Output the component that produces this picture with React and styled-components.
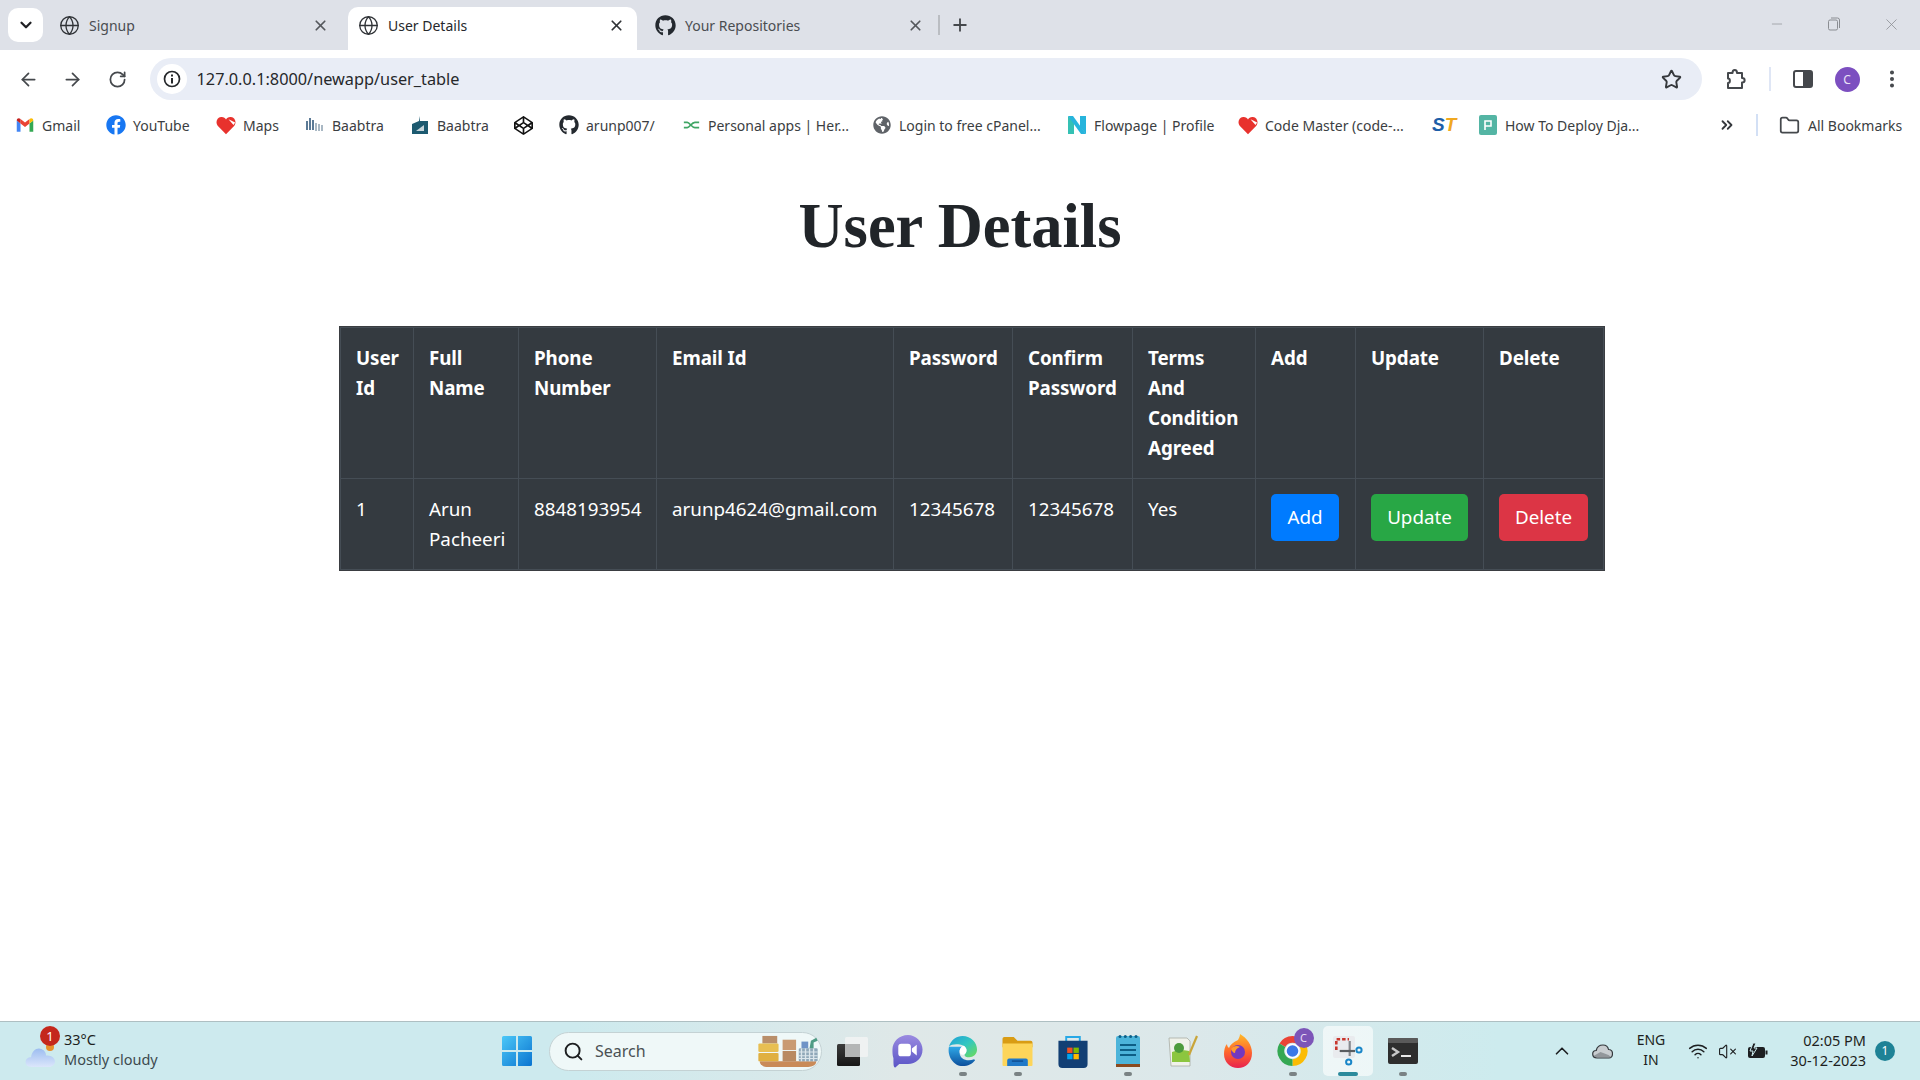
import React from "react";
import styled, { createGlobalStyle } from "styled-components";
import {
  ArrowLeft,
  ArrowRight,
  RotateCw,
  Star,
  X,
  Plus,
  ChevronDown,
  ChevronUp,
  ChevronsRight,
  Search,
  Globe,
  Folder,
  EllipsisVertical,
  Minus,
  Wifi,
  VolumeX,
} from "lucide-react";
import { FaGithub, FaFacebook, FaCodepen, FaGlobeAmericas } from "react-icons/fa";

const UI_FONT = `"Noto Sans", "Open Sans", sans-serif`;

const GlobalStyle = createGlobalStyle`
  html, body {
    margin: 0;
    padding: 0;
    background: #fff;
  }
  * {
    box-sizing: border-box;
  }
`;

/* ---------- small drawings ---------- */

const Gmail = () => (
  <svg width="18" height="18" viewBox="0 0 24 24">
    <path fill="#4285F4" d="M1 6v15h5V10z" />
    <path fill="#34A853" d="M18 10v11h5V6z" />
    <path fill="#EA4335" d="M6 10l6 4.5L18 10V4l-6 4.500L6 4z" />
    <path fill="#FBBC04" d="M18 4v6l5-4c0-3-3-4-5-2z" />
    <path fill="#C5221F" d="M1 6l5 4V4C4 2 1 3 1 6z" />
  </svg>
);

const RedHeart = () => (
  <svg width="21" height="20" viewBox="0 0 24 24">
    <path
      fill="#e8322d"
      d="M12 23L2 13C-1 9 1 3 6 2.500c3-.3 5 1 6 3 1-2 3-3.300 6-3 5 .5 7 6.500 4 10.500z"
    />
    <path fill="#fff" d="M15 5l8 4-2 3z" />
  </svg>
);

const BaabtraBars = () => (
  <svg width="20" height="18" viewBox="0 0 20 18">
    <g fill="#5b7a96">
      <rect x="1" y="5" width="2" height="9" />
      <rect x="4" y="2" width="2" height="12" />
      <rect x="7" y="4" width="2" height="10" />
    </g>
    <g fill="#a9b8c4">
      <rect x="10" y="7" width="2" height="8" />
      <rect x="13" y="8" width="2" height="7" />
      <rect x="16" y="9" width="2" height="6" />
    </g>
  </svg>
);

const BaabtraBook = () => (
  <svg width="18" height="20" viewBox="0 0 18 20">
    <path fill="#1d5a70" d="M1 9l7-3 1-5v5h8v13H1z" />
    <path fill="#fff" d="M5 16l8-6v6z" opacity=".75" />
  </svg>
);

const Glasses = () => (
  <svg width="17" height="12" viewBox="0 0 20 12" fill="none" stroke="#3fa564" strokeWidth="2">
    <path d="M1 3h4c3 0 5 6 9 6h5" />
    <path d="M1 9h4c3 0 5-6 9-6h5" />
  </svg>
);

const Flowpage = () => (
  <svg width="20" height="20" viewBox="0 0 20 20">
    <path fill="#35c1b4" d="M1 1l6 6v12H1z" />
    <path fill="#27b4dc" d="M1 1h5l13 18h-5z" />
    <path fill="#27b4dc" d="M13 1h6v18l-6-7z" />
  </svg>
);

const TealPage = () => (
  <svg width="18" height="20" viewBox="0 0 18 20">
    <rect width="18" height="20" rx="2" fill="#54b5a4" />
    <path fill="none" stroke="#fff" strokeWidth="1.600" d="M6 15V6h6v5H6" />
  </svg>
);

const Info = () => (
  <svg width="18" height="18" viewBox="0 0 18 18">
    <circle cx="9" cy="9" r="7.500" fill="none" stroke="#26282b" strokeWidth="1.700" />
    <rect x="8" y="8" width="2" height="5.500" fill="#26282b" />
    <rect x="8" y="4.500" width="2" height="2" fill="#26282b" />
  </svg>
);

const Puzzle = () => (
  <svg width="22" height="24" viewBox="0 0 22 24" fill="none" stroke="#45484c" strokeWidth="2" strokeLinejoin="round">
    <path d="M3 6h4.500c0-4 4.500-4 4.500 0H17v5c3.500 0 3.500 4.500 0 4.500V21H3v-5c2.500 0 2.500-4.500 0-4.500z" />
  </svg>
);

const SidePanel = () => (
  <svg width="20" height="20" viewBox="0 0 20 20">
    <rect x="1" y="2" width="18" height="16" rx="2" fill="none" stroke="#45484c" strokeWidth="2" />
    <rect x="10" y="2" width="9" height="16" fill="#45484c" />
  </svg>
);

const Restore = () => (
  <svg width="14" height="14" viewBox="0 0 14 14" fill="none" stroke="#8a8d92" strokeWidth="1">
    <rect x="1.500" y="3" width="9" height="10" rx="1.500" />
    <path d="M4 1h6.500A2 2 0 0 1 12.500 3v8" />
  </svg>
);

const WeatherCloud = () => (
  <svg width="30" height="26" viewBox="0 0 30 26">
    <defs>
      <linearGradient id="wcloud" x1="0" y1="0" x2="0" y2="1">
        <stop offset="0" stopColor="#9dbdf0" />
        <stop offset="1" stopColor="#dbe6fb" />
      </linearGradient>
    </defs>
    <circle cx="25" cy="5" r="4" fill="#e8912c" />
    <path
      fill="url(#wcloud)"
      d="M7 25C2 25 0 22 .7 19 1.300 16 4 15 6 15.300 7 9 11 6 15 6.700c4 .7 6 3.600 6 6.800 5-.7 9 2.500 9 6 0 3-3 5.500-6 5.500z"
    />
  </svg>
);

const WindowsLogo = () => (
  <svg width="30" height="30" viewBox="0 0 30 30">
    <defs>
      <linearGradient id="win" x1="0" y1="0" x2="1" y2="1">
        <stop offset="0" stopColor="#4cc8f8" />
        <stop offset="1" stopColor="#0a74d0" />
      </linearGradient>
    </defs>
    <path fill="url(#win)" d="M0 1.500A1.500 1.500 0 0 1 1.500 0H14v14H0zM16 0h12.500A1.500 1.500 0 0 1 30 1.500V14H16zM0 16h14v14H1.500A1.500 1.500 0 0 1 0 28.500zM16 16h14v12.500a1.500 1.500 0 0 1-1.500 1.500H16z" />
  </svg>
);

const Shelves = () => (
  <svg width="62" height="32" viewBox="0 0 46 34" preserveAspectRatio="none">
    <path fill="#c98a58" d="M2 28h42c0 4-3 6-6 6H8c-3 0-6-2-6-6z" />
    <rect x="4" y="1" width="11" height="8" fill="#b98e6a" />
    <rect x="1" y="9" width="15" height="9" rx="1" fill="#e8bf52" />
    <rect x="1" y="19" width="15" height="9" rx="1" fill="#e0b040" />
    <rect x="19" y="5" width="10" height="11" fill="#c99a72" />
    <rect x="19" y="17" width="10" height="11" fill="#b98a62" />
    <rect x="31" y="14" width="14" height="14" rx="1" fill="#8fa7b8" />
    <path stroke="#dce6ec" strokeWidth="1" d="M33 14v14M36 14v14M39 14v14M42 14v14M31 18h14M31 22h14M31 25h14" />
    <rect x="33" y="7" width="5" height="7" fill="#6f93c6" />
    <path fill="#4f9c85" d="M39 14l1-8 4-3 1 3-3 2v6z" />
  </svg>
);

const TaskView = () => (
  <svg width="31" height="29" viewBox="0 0 31 29">
    <defs>
      <linearGradient id="tv" x1="0" y1="0" x2="0" y2="1">
        <stop offset="0" stopColor="#3c3c3c" />
        <stop offset="1" stopColor="#161616" />
      </linearGradient>
    </defs>
    <rect x="0" y="7" width="23" height="22" rx="1.500" fill="url(#tv)" />
    <rect x="8" y="0" width="23" height="20" rx="1.500" fill="#f2f3f3" opacity=".85" />
    <rect x="8" y="7" width="15" height="13" fill="#b4b6b6" />
  </svg>
);

const ChatIcon = () => (
  <svg width="31" height="33" viewBox="0 0 31 34">
    <defs>
      <linearGradient id="chat" x1="0" y1="0" x2="0" y2="1">
        <stop offset="0" stopColor="#9a8ae0" />
        <stop offset="1" stopColor="#5a55c6" />
      </linearGradient>
    </defs>
    <path fill="url(#chat)" d="M16 0c8 0 15 7 15 15 0 9-7 15-15 15H7l-4 3.500C1 34 1 30 1 24 0 21 0 18 0 15 0 7 7 0 16 0z" />
    <rect x="6" y="9" width="13" height="13" rx="3" fill="#fff" />
    <path fill="#fff" d="M20 14l5-4v11l-5-4z" />
  </svg>
);

const EdgeIcon = () => (
  <svg width="31" height="32" viewBox="0 0 32 33">
    <defs>
      <linearGradient id="edge1" x1="0" y1="0" x2="0" y2="1">
        <stop offset="0" stopColor="#2fa9e8" />
        <stop offset="1" stopColor="#0c4f9c" />
      </linearGradient>
      <linearGradient id="edge2" x1="0" y1="0" x2="1" y2="1">
        <stop offset="0" stopColor="#1f9fd8" />
        <stop offset=".5" stopColor="#32c7c0" />
        <stop offset="1" stopColor="#6fdc55" />
      </linearGradient>
    </defs>
    <path
      fill="url(#edge1)"
      d="M2 12C0 22 7 32 16 32c6 0 10-2 13-6l-1-1c-7 3-15 0-15-7 0-3 1-5 3-6z"
    />
    <path
      fill="url(#edge2)"
      d="M2 12C4 5 10 1 16 1c9 0 15 7 15 14 0 5-4 8-8 8-3 0-5-1-5-3 3-2 3-7-1-9C12 9 5 9 2 12z"
    />
    <path fill="#fff" d="M18 20c-3 1.500-5.500-1-5-4 .5-3 2.500-4.500 4-5 4 2 4 7 1 9z" />
  </svg>
);

const FolderIcon = () => (
  <svg width="31" height="30" viewBox="0 0 32 32">
    <path fill="#d99c14" d="M0 3a2 2 0 0 1 2-2h10l4 4h14a2 2 0 0 1 2 2v5H0z" />
    <path fill="#fdd55a" d="M0 8h32v23a1 1 0 0 1-1 1H1a1 1 0 0 1-1-1z" />
    <path fill="#1f78c8" d="M5 32v-6a2 2 0 0 1 2-2h18a2 2 0 0 1 2 2v6z" />
    <rect x="10" y="26" width="12" height="1.500" fill="#0f4c90" />
  </svg>
);

const StoreIcon = () => (
  <svg width="30" height="33" viewBox="0 0 30 34">
    <path fill="none" stroke="#27a8e6" strokeWidth="2" d="M8 9V2h14v7" />
    <path fill="#123f74" d="M0 6h30v24a4 4 0 0 1-4 4H4a4 4 0 0 1-4-4z" />
    <rect x="9" y="13" width="5.500" height="5.500" fill="#f25022" />
    <rect x="15.500" y="13" width="5.500" height="5.500" fill="#7fba00" />
    <rect x="9" y="19.500" width="5.500" height="5.500" fill="#00a4ef" />
    <rect x="15.500" y="19.500" width="5.500" height="5.500" fill="#ffb900" />
  </svg>
);

const NotepadIcon = () => (
  <svg width="24" height="34" viewBox="0 0 24 34">
    <rect x="0" y="2" width="24" height="30" rx="2" fill="#4cb4da" />
    <rect x="0" y="30" width="24" height="3" fill="#8a4a20" />
    <g fill="#0d5f86">
      <circle cx="4" cy="2.500" r="1.500" />
      <circle cx="9.300" cy="2.500" r="1.500" />
      <circle cx="14.600" cy="2.500" r="1.500" />
      <circle cx="20" cy="2.500" r="1.500" />
      <rect x="4" y="10" width="16" height="2" />
      <rect x="4" y="15" width="16" height="2" />
      <rect x="4" y="20" width="16" height="2" />
    </g>
  </svg>
);

const NotepadPP = () => (
  <svg width="30" height="32" viewBox="0 0 30 32">
    <path fill="#f0f2ea" stroke="#a8aca4" strokeWidth=".8" d="M1 3h18l3 3v25H3z" />
    <path fill="#8cc63f" d="M4 17c5-2 13-2 17-1l1 11H4z" />
    <circle cx="11" cy="13" r="5" fill="#4d9b3c" />
    <path stroke="#c9a53a" strokeWidth="2.200" d="M21 20L29 1" />
  </svg>
);

const FirefoxIcon = () => (
  <svg width="28" height="34" viewBox="0 0 28 34">
    <defs>
      <linearGradient id="ffx" x1="0" y1="0" x2="0" y2="1">
        <stop offset="0" stopColor="#ffbb2a" />
        <stop offset=".5" stopColor="#ff6a2b" />
        <stop offset="1" stopColor="#e8224f" />
      </linearGradient>
    </defs>
    <path fill="url(#ffx)" d="M14 6c1-2 2-4 2-6 7 4 12 11 12 19 0 9-6 15-14 15S0 28 0 20C0 16 1 12 3 10c0 2 1 3 2 4 1-3 4-6 9-8z" />
    <circle cx="14" cy="18" r="7" fill="#7338bf" />
    <path fill="#ff9a2e" d="M7 15c2-3 6-4 9-2-3 1-5 3-5 6-2 0-3-2-4-4z" />
  </svg>
);

const ChromeIcon = () => (
  <svg width="31" height="32" viewBox="0 0 32 32" fill="none" strokeWidth="7">
    <path stroke="#ea4335" d="M5.600 10A12 12 0 0 1 26.400 10" />
    <path stroke="#fbbc04" d="M26.400 10A12 12 0 0 1 16 28" />
    <path stroke="#34a853" d="M16 28A12 12 0 0 1 5.600 10" />
    <circle cx="16" cy="16" r="7.500" fill="#fff" stroke="none" />
    <circle cx="16" cy="16" r="6" fill="#3b78e7" stroke="none" />
  </svg>
);

const SnipIcon = () => (
  <svg width="30" height="30" viewBox="0 0 30 30">
    <rect x="0" y="0" width="22" height="22" rx="2" fill="#e9ebee" />
    <path fill="none" stroke="#c8372d" strokeWidth="2.600" strokeDasharray="3.500 2" d="M3.300 14V3.300H16" />
    <path fill="none" stroke="#85888c" strokeWidth="2.200" d="M16.700 5v15" />
    <path fill="none" stroke="#5a5d60" strokeWidth="2.200" d="M6.700 15H22" />
    <circle cx="26" cy="14" r="2.600" fill="none" stroke="#1a86c8" strokeWidth="2" />
    <circle cx="15.700" cy="26" r="2.600" fill="none" stroke="#1a86c8" strokeWidth="2" />
  </svg>
);

const TerminalIcon = () => (
  <svg width="30" height="26" viewBox="0 0 30 26">
    <rect width="30" height="26" rx="2" fill="#2e2e2e" />
    <rect width="30" height="5" rx="1" fill="#5a5a5a" />
    <path fill="none" stroke="#c8c8c8" strokeWidth="2.400" d="M4 10l6 4-6 4" />
    <rect x="13" y="17" width="10" height="2" fill="#e8e8e8" />
  </svg>
);

const OneDrive = () => (
  <svg width="21" height="15" viewBox="0 0 21 15">
    <path
      fill="#c8cdd0"
      stroke="#33383c"
      strokeWidth="1.200"
      d="M5 14C2 14 .7 12 .7 10s1.500-3.500 3.500-3.500C5 3 8 1 11 1s5 2 5.500 4.500c2.500 0 4 2 4 4.300S19 14 17 14z"
    />
    <path fill="#7b8084" d="M1.500 12l7-4 8 3 3 2.300H4z" opacity=".7" />
  </svg>
);

const Battery = () => (
  <svg width="21" height="17" viewBox="0 0 21 17">
    <rect x="1" y="4" width="17" height="11" rx="2" fill="#1d1f21" />
    <rect x="18.500" y="7.500" width="2" height="4" fill="#1d1f21" />
    <path fill="#1d1f21" stroke="#cdebee" d="M6 0L3 8h3l-1 5 5-8H7l2-5z" />
  </svg>
);

/* ---------- data ---------- */

const bookmarks = [
  { icon: <Gmail />, label: "Gmail", w: 91 },
  { icon: <FaFacebook size={20} color="#1877f2" />, label: "YouTube", w: 110 },
  { icon: <RedHeart />, label: "Maps", w: 89 },
  { icon: <BaabtraBars />, label: "Baabtra", w: 105 },
  { icon: <BaabtraBook />, label: "Baabtra", w: 103 },
  { icon: <FaCodepen size={19} color="#111" />, w: 46 },
  { icon: <FaGithub size={20} color="#24292f" />, label: "arunp007/", w: 122 },
  { icon: <Glasses />, label: "Personal apps | Her...", w: 191 },
  { icon: <FaGlobeAmericas size={18} color="#5f6368" />, label: "Login to free cPanel...", w: 195 },
  { icon: <Flowpage />, label: "Flowpage | Profile", w: 171 },
  { icon: <RedHeart />, label: "Code Master (code-...", w: 196 },
  { st: true, w: 44 },
  { icon: <TealPage />, label: "How To Deploy Dja...", w: 241 },
];

const columns = [73, 105, 138, 237, 119, 120, 123, 100, 128, 120];

const headings = [
  "User Id",
  "Full Name",
  "Phone Number",
  "Email Id",
  "Password",
  "Confirm Password",
  "Terms And Condition Agreed",
  "Add",
  "Update",
  "Delete",
];

const cells = ["1", "Arun Pacheeri", "8848193954", "arunp4624@gmail.com", "12345678", "12345678", "Yes"];

const actions = [
  { label: "Add", bg: "#007bff", w: 68 },
  { label: "Update", bg: "#28a745", w: 97 },
  { label: "Delete", bg: "#dc3545", w: 89 },
];

const taskIcons = [
  { icon: <TaskView /> },
  { icon: <ChatIcon /> },
  { icon: <EdgeIcon />, dot: true },
  { icon: <FolderIcon />, dot: true },
  { icon: <StoreIcon /> },
  { icon: <NotepadIcon />, dot: true },
  { icon: <NotepadPP /> },
  { icon: <FirefoxIcon /> },
  { icon: <ChromeIcon />, dot: true, badge: "C" },
  { icon: <SnipIcon />, active: true },
  { icon: <TerminalIcon />, dot: true },
];

/* ---------- app ---------- */

const App = () => {
  return (
    <Page>
      <GlobalStyle />
      <TabStrip>
        <TabSearch>
          <ChevronDown size={18} strokeWidth={3} color="#202124" />
        </TabSearch>
        <Tab $w={300} $pl={11} $pr={19}>
          <Globe size={21} strokeWidth={1.5} color="#303337" />
          <TabTitle>Signup</TabTitle>
          <X size={17} strokeWidth={2.4} color="#55585c" />
        </Tab>
        <Tab $active $w={289} $pl={10} $pr={12}>
          <Globe size={21} strokeWidth={1.5} color="#303337" />
          <TabTitle $active>User Details</TabTitle>
          <X size={17} strokeWidth={2.4} color="#303337" />
        </Tab>
        <Tab $w={297} $pl={18} $pr={10}>
          <FaGithub size={21} color="#24292f" />
          <TabTitle>Your Repositories</TabTitle>
          <X size={17} strokeWidth={2.4} color="#55585c" />
        </Tab>
        <TabDivider />
        <NewTab>
          <Plus size={20} strokeWidth={2.2} color="#45484c" />
        </NewTab>
        <WindowControls>
          <Minus size={16} strokeWidth={1} color="#8a8d92" />
          <Restore />
          <X size={19} strokeWidth={1} color="#8a8d92" />
        </WindowControls>
      </TabStrip>

      <Toolbar>
        <NavButton>
          <ArrowLeft size={21} strokeWidth={2} color="#45484c" />
        </NavButton>
        <NavButton>
          <ArrowRight size={21} strokeWidth={2} color="#45484c" />
        </NavButton>
        <NavButton>
          <RotateCw size={19} strokeWidth={2.2} color="#45484c" />
        </NavButton>
        <Omnibox>
          <SiteInfo>
            <Info />
          </SiteInfo>
          <Url>127.0.0.1:8000/newapp/user_table</Url>
          <Star size={21} strokeWidth={2.2} color="#35383c" />
        </Omnibox>
        <ToolIcons>
          <Puzzle />
          <ToolDivider />
          <SidePanel />
          <Avatar>C</Avatar>
          <EllipsisVertical size={22} strokeWidth={2.4} color="#45484c" />
        </ToolIcons>
      </Toolbar>

      <BookmarkBar>
        {bookmarks.map((b, i) => (
          <Bookmark key={i} $w={b.w}>
            {b.st ? (
              <StMark>
                <StBlue>S</StBlue>
                <StOrange>T</StOrange>
              </StMark>
            ) : (
              <BookmarkIcon>{b.icon}</BookmarkIcon>
            )}
            {b.label && <BookmarkLabel>{b.label}</BookmarkLabel>}
          </Bookmark>
        ))}
        <MoreBookmarks>
          <ChevronsRight size={18} strokeWidth={2.4} color="#35383c" />
        </MoreBookmarks>
        <BookmarkDivider />
        <Folder size={21} strokeWidth={2} color="#45484c" />
        <BookmarkLabel>All Bookmarks</BookmarkLabel>
      </BookmarkBar>

      <Main>
        <Title>User Details</Title>
        <UserTable>
          <colgroup>
            {columns.map((w, i) => (
              <Col key={i} $w={w} />
            ))}
          </colgroup>
          <thead>
            <tr>
              {headings.map((h) => (
                <Th key={h}>{h}</Th>
              ))}
            </tr>
          </thead>
          <tbody>
            <tr>
              {cells.map((c, i) => (
                <Td key={i}>{c}</Td>
              ))}
              {actions.map((a) => (
                <Td key={a.label}>
                  <ActionButton type="button" $bg={a.bg} $w={a.w}>
                    {a.label}
                  </ActionButton>
                </Td>
              ))}
            </tr>
          </tbody>
        </UserTable>
      </Main>

      <Taskbar>
        <Weather>
          <WeatherIcon>
            <WeatherCloud />
            <WeatherBadge>1</WeatherBadge>
          </WeatherIcon>
          <WeatherText>
            <Temp>33°C</Temp>
            <Sky>Mostly cloudy</Sky>
          </WeatherText>
        </Weather>
        <StartButton>
          <WindowsLogo />
        </StartButton>
        <SearchPill>
          <Search size={21} strokeWidth={2.2} color="#1d1f21" />
          <SearchText>Search</SearchText>
          <Shelves />
        </SearchPill>
        <TaskIcons>
          {taskIcons.map((t, i) => (
            <TaskSlot key={i} $active={t.active}>
              {t.icon}
              {t.badge && <ChromeBadge>{t.badge}</ChromeBadge>}
              {(t.dot || t.active) && <RunDot $active={t.active} />}
            </TaskSlot>
          ))}
        </TaskIcons>
        <Tray>
          <ChevronUp size={22} strokeWidth={1.8} color="#1d1f21" />
          <OneDrive />
          <Lang>
            <span>ENG</span>
            <span>IN</span>
          </Lang>
          <TrayIcons>
            <Wifi size={20} strokeWidth={1.8} color="#1d1f21" />
            <VolumeX size={19} strokeWidth={1.4} color="#1d1f21" />
            <Battery />
          </TrayIcons>
          <Clock>
            <span>02:05 PM</span>
            <span>30-12-2023</span>
          </Clock>
          <NotifyCount>1</NotifyCount>
        </Tray>
      </Taskbar>
    </Page>
  );
};

const Page = styled.div`
  display: flex;
  flex-direction: column;
  width: 1920px;
  height: 1080px;
  overflow: hidden;
  font-family: ${UI_FONT};
  background: #fff;
`;

const TabStrip = styled.div`
  display: flex;
  align-items: flex-end;
  height: 50px;
  padding-left: 8px;
  background: #dee1e8;
`;

const TabSearch = styled.div`
  display: flex;
  align-items: center;
  justify-content: center;
  align-self: flex-start;
  width: 35px;
  height: 34px;
  margin-top: 8px;
  margin-right: 5px;
  background: #fff;
  border-radius: 10px;
`;

const Tab = styled.div`
  display: flex;
  align-items: center;
  gap: 9px;
  flex: none;
  width: ${(p) => p.$w}px;
  height: 43px;
  padding: 0 ${(p) => p.$pr}px 7px ${(p) => p.$pl}px;
  background: ${(p) => (p.$active ? "#fff" : "transparent")};
  border-radius: 10px 10px 0 0;
`;

const TabTitle = styled.span`
  flex: 1;
  font-size: 14px;
  color: ${(p) => (p.$active ? "#26282b" : "#4a4d51")};
  white-space: nowrap;
`;

const TabDivider = styled.div`
  align-self: flex-start;
  width: 2px;
  height: 20px;
  margin: 15px 0 0 4px;
  background: #babdc2;
`;

const NewTab = styled.div`
  display: flex;
  align-items: center;
  justify-content: center;
  align-self: flex-start;
  width: 20px;
  height: 20px;
  margin: 15px 0 0 10px;
`;

const WindowControls = styled.div`
  display: flex;
  align-items: center;
  justify-content: space-between;
  align-self: flex-start;
  width: 132px;
  height: 20px;
  margin: 14px 19px 0 auto;
`;

const Toolbar = styled.div`
  display: flex;
  align-items: center;
  height: 58px;
  padding: 0 0 0 6px;
  background: #fff;
  border-radius: 10px 10px 0 0;
`;

const NavButton = styled.div`
  display: flex;
  align-items: center;
  justify-content: center;
  width: 44.500px;
  height: 40px;
`;

const Omnibox = styled.div`
  display: flex;
  align-items: center;
  width: 1552px;
  height: 42px;
  margin-left: 10px;
  padding: 0 20px 0 7px;
  background: #e9edf6;
  border-radius: 21px;
`;

const SiteInfo = styled.div`
  display: flex;
  align-items: center;
  justify-content: center;
  width: 30px;
  height: 30px;
  background: #fff;
  border-radius: 50%;
`;

const Url = styled.span`
  flex: 1;
  margin-left: 10px;
  font-size: 16.300px;
  color: #26282b;
`;

const ToolIcons = styled.div`
  display: flex;
  align-items: center;
  margin-left: 23px;
  & > svg:nth-child(3) {
    margin-left: 22px;
  }
  & > svg:last-child {
    margin-left: 21px;
  }
`;

const ToolDivider = styled.div`
  width: 2px;
  height: 24px;
  margin-left: 22px;
  background: #dfe6f5;
`;

const Avatar = styled.div`
  display: flex;
  align-items: center;
  justify-content: center;
  width: 25px;
  height: 25px;
  margin-left: 22px;
  border-radius: 50%;
  background: #7c4fc0;
  color: #e9e0f7;
  font-size: 12px;
`;

const BookmarkBar = styled.div`
  display: flex;
  align-items: center;
  height: 34px;
  padding-left: 15px;
  background: #fff;
  & > svg {
    margin-left: 21px;
  }
`;

const Bookmark = styled.div`
  display: flex;
  align-items: center;
  gap: 7px;
  flex: none;
  width: ${(p) => p.$w}px;
`;

const BookmarkIcon = styled.span`
  display: flex;
  align-items: center;
  justify-content: center;
  width: 20px;
  height: 20px;
`;

const BookmarkLabel = styled.span`
  font-size: 14px;
  color: #3b3e42;
  white-space: nowrap;
  svg + & {
    margin-left: 8px;
  }
`;

const StMark = styled.span`
  margin-left: -2px;
  font-family: "Liberation Sans", sans-serif;
  font-size: 19px;
  font-weight: 700;
  font-style: italic;
`;

const StBlue = styled.span`
  color: #1c5ea8;
`;

const StOrange = styled.span`
  color: #f0a820;
`;

const MoreBookmarks = styled.div`
  display: flex;
  align-items: center;
  margin-left: -1px;
`;

const BookmarkDivider = styled.div`
  width: 2px;
  height: 22px;
  margin-left: 20px;
  background: #d3e0f5;
`;

const Main = styled.main`
  flex: 1;
`;

const Title = styled.h1`
  margin: 47px 0 63px;
  font-family: "Liberation Serif", "Times New Roman", serif;
  font-size: 62.400px;
  font-weight: 700;
  line-height: 1.2;
  text-align: center;
  color: #212529;
`;

const UserTable = styled.table`
  width: 1263px;
  margin-left: 340px;
  table-layout: fixed;
  border-collapse: collapse;
  border: 1px solid #565b60;
  box-shadow: 0 0 0 1px #3a3d41;
  background: #343a40;
  color: #fff;
  font-size: 18.800px;
  line-height: 30px;
`;

const Col = styled.col`
  width: ${(p) => p.$w}px;
`;

const Th = styled.th`
  padding: 15px;
  border: 1px solid #454d55;
  font-weight: 700;
  letter-spacing: -0.1px;
  text-align: left;
  vertical-align: top;
`;

const Td = styled.td`
  padding: 15px;
  border: 1px solid #454d55;
  vertical-align: top;
`;

const ActionButton = styled.button`
  display: block;
  width: ${(p) => p.$w}px;
  height: 47px;
  padding: 0;
  border: 0;
  border-radius: 5px;
  background: ${(p) => p.$bg};
  color: #fff;
  font: inherit;
`;

const Taskbar = styled.footer`
  display: flex;
  align-items: center;
  height: 59px;
  background: linear-gradient(90deg, #cdeaee 0%, #cdeaee 30%, #dfe8e8 47%, #dce8ea 62%, #cdebee 78%, #cdebee 100%);
  border-top: 1px solid #aebfc2;
`;

const Weather = styled.div`
  display: flex;
  align-items: center;
  width: 502px;
  padding-left: 25px;
`;

const WeatherIcon = styled.div`
  position: relative;
  width: 30px;
  height: 26px;
  margin-top: 8px;
`;

const WeatherBadge = styled.span`
  position: absolute;
  top: -16px;
  left: 15px;
  width: 20px;
  height: 20px;
  border-radius: 50%;
  background: #c4281c;
  color: #fff;
  font-size: 13px;
  line-height: 20px;
  text-align: center;
`;

const WeatherText = styled.div`
  display: flex;
  flex-direction: column;
  margin: 0 0 4px 9px;
  line-height: 20px;
  font-size: 14.500px;
`;

const Temp = styled.span`
  color: #1d1f21;
`;

const Sky = styled.span`
  color: #3d4a4e;
`;

const StartButton = styled.div`
  display: flex;
  width: 47px;
`;

const SearchPill = styled.div`
  display: flex;
  align-items: center;
  width: 273px;
  height: 39px;
  padding: 0 2px 0 13px;
  border: 1px solid #c4d2d4;
  border-radius: 20px;
  background: #eff8f8;
`;

const SearchText = styled.span`
  flex: 1;
  margin-left: 11px;
  font-size: 16px;
  color: #4b5154;
`;

const TaskIcons = styled.div`
  display: flex;
  align-items: center;
  margin-left: 3px;
`;

const TaskSlot = styled.div`
  position: relative;
  display: flex;
  align-items: center;
  justify-content: center;
  width: 50px;
  height: 50px;
  margin: 0 2.500px;
  border-radius: 5px;
  background: ${(p) => (p.$active ? "rgba(255, 255, 255, 0.6)" : "transparent")};
`;

const ChromeBadge = styled.span`
  position: absolute;
  top: 2px;
  right: 4px;
  width: 20px;
  height: 20px;
  border-radius: 50%;
  background: #7c55b8;
  color: #e6dcf5;
  font-size: 11px;
  line-height: 20px;
  text-align: center;
`;

const RunDot = styled.span`
  position: absolute;
  bottom: 0;
  left: 50%;
  width: ${(p) => (p.$active ? "20px" : "8px")};
  height: 4px;
  transform: translateX(-50%);
  border-radius: 2px;
  background: ${(p) => (p.$active ? "#2b8a9c" : "#7a8284")};
`;

const Tray = styled.div`
  display: flex;
  align-items: center;
  margin-left: 121px;
  color: #1d1f21;
  & > svg:nth-child(2) {
    margin-left: 19px;
  }
`;

const Lang = styled.div`
  display: flex;
  flex-direction: column;
  align-items: center;
  width: 40px;
  margin: 0 0 2px 18px;
  font-size: 14px;
  line-height: 20px;
`;

const TrayIcons = styled.div`
  display: flex;
  align-items: center;
  gap: 10px;
  margin-left: 17px;
`;

const Clock = styled.div`
  display: flex;
  flex-direction: column;
  align-items: flex-end;
  width: 98px;
  margin-bottom: 2px;
  font-size: 14.500px;
  line-height: 20px;
`;

const NotifyCount = styled.span`
  width: 20px;
  height: 20px;
  margin-left: 9px;
  border-radius: 50%;
  background: #1e8296;
  color: #fff;
  font-size: 12px;
  line-height: 20px;
  text-align: center;
`;

export default App;
